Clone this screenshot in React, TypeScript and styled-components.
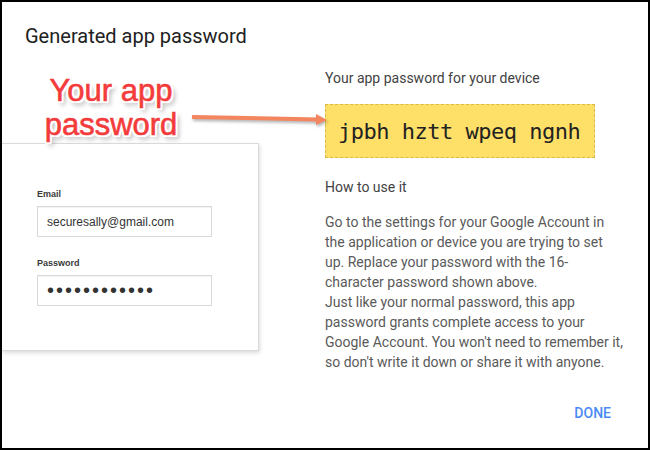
import React from "react";
import styled, { createGlobalStyle } from "styled-components";

const GlobalStyle = createGlobalStyle`
  * { box-sizing: border-box; }
  body {
    margin: 0;
    background: #fff;
    font-family: Roboto, "Liberation Sans", Arial, sans-serif;
  }
`;

const Frame = styled.div`
  position: relative;
  width: 650px;
  height: 450px;
  border: 2px solid #000;
  background: #fff;
  display: flex;
  flex-direction: column;
`;

const Title = styled.h1`
  margin: 22px 0 0 23px;
  font-size: 20px;
  line-height: 24px;
  font-weight: 400;
  color: #212121;
`;

const Body = styled.div`
  display: flex;
  flex: 1;
`;

const LeftColumn = styled.div`
  width: 323px;
  display: flex;
  flex-direction: column;
`;

const Annotation = styled.div`
  position: relative;
  z-index: 2;
  width: 218px;
  margin-top: 26px;
  text-align: center;
  font-family: "Liberation Sans", Arial, sans-serif;
  font-size: 31px;
  line-height: 34px;
  color: #f43b3b;
  -webkit-text-stroke: 0.6px #f43b3b;
  text-shadow: -2px -2px 0 #fff, 2px -2px 0 #fff, -2px 2px 0 #fff,
    2px 2px 0 #fff, 0 -2px 0 #fff, 0 2px 0 #fff, -2px 0 0 #fff, 2px 0 0 #fff,
    3px 4px 5px rgba(0, 0, 0, 0.4);
`;

const Card = styled.div`
  width: 257px;
  margin-top: 1px;
  padding: 44px 0 44px 35px;
  background: #fff;
  border: 1px solid #dadada;
  border-left: none;
  box-shadow: 1px 2px 4px rgba(0, 0, 0, 0.14);
`;

const FieldLabel = styled.div<{ $gap?: number }>`
  margin-top: ${(p) => p.$gap ?? 0}px;
  margin-bottom: 6px;
  font-family: "Liberation Sans", Arial, sans-serif;
  font-size: 9px;
  line-height: 12px;
  font-weight: 700;
  color: #3a3a3a;
`;

const Field = styled.div`
  width: 175px;
  height: 31px;
  padding-left: 9px;
  display: flex;
  align-items: center;
  border: 1px solid #d9d9d9;
  box-shadow: inset 0 1px 1px rgba(0, 0, 0, 0.05);
  font-family: "Liberation Sans", Arial, sans-serif;
  font-size: 12px;
  color: #333;
`;

const Dots = styled.span`
  font-size: 20px;
  letter-spacing: 2px;
  color: #333;
`;

const RightColumn = styled.div`
  width: 300px;
  margin-top: 20px;
  display: flex;
  flex-direction: column;
`;

const Heading = styled.div<{ $gap?: number }>`
  margin-top: ${(p) => p.$gap ?? 0}px;
  font-size: 14px;
  line-height: 20px;
  color: #424242;
`;

const PasswordBox = styled.div`
  width: 270px;
  height: 54px;
  margin-top: 16px;
  padding: 1px 0 0 12px;
  background: #fedf68;
  border: 1px dashed #d8bb45;
  font-family: "DejaVu Sans Mono", "Liberation Mono", monospace;
  font-size: 22px;
  letter-spacing: -0.5px;
  line-height: 52px;
  color: #222;
`;

const Instructions = styled.p`
  width: 310px;
  margin: 15px 0 0;
  font-size: 14px;
  line-height: 20px;
  color: #5a5a5a;
  white-space: nowrap;
`;

const Actions = styled.div`
  display: flex;
  justify-content: flex-end;
  margin-top: 31px;
  padding-right: 14px;
`;

const DoneButton = styled.button`
  padding: 0;
  border: none;
  background: none;
  font-family: Roboto, "Liberation Sans", Arial, sans-serif;
  font-size: 14px;
  line-height: 20px;
  font-weight: 500;
  color: #4a8af4;
  cursor: pointer;
`;

const Arrow = styled.svg`
  position: absolute;
  left: 186px;
  top: 104px;
  overflow: visible;
  filter: drop-shadow(1px 2px 1.5px rgba(0, 0, 0, 0.3));
`;

const instructionLines = [
  "Go to the settings for your Google Account in",
  "the application or device you are trying to set",
  "up. Replace your password with the 16-",
  "character password shown above.",
  "Just like your normal password, this app",
  "password grants complete access to your",
  "Google Account. You won't need to remember it,",
  "so don't write it down or share it with anyone.",
];

export default function App() {
  return (
    <>
      <GlobalStyle />
      <Frame>
        <Title>Generated app password</Title>
        <Body>
          <LeftColumn>
            <Annotation>
              Your app
              <br />
              password
            </Annotation>
            <Card>
              <FieldLabel>Email</FieldLabel>
              <Field>securesally@gmail.com</Field>
              <FieldLabel $gap={20}>Password</FieldLabel>
              <Field>
                <Dots>••••••••••••</Dots>
              </Field>
            </Card>
          </LeftColumn>
          <RightColumn>
            <Heading>Your app password for your device</Heading>
            <PasswordBox>jpbh hztt wpeq ngnh</PasswordBox>
            <Heading $gap={19}>How to use it</Heading>
            <Instructions>
              {instructionLines.map((line, i) => (
                <React.Fragment key={i}>
                  {line}
                  {i < instructionLines.length - 1 && <br />}
                </React.Fragment>
              ))}
            </Instructions>
            <Actions>
              <DoneButton>DONE</DoneButton>
            </Actions>
          </RightColumn>
        </Body>
        <Arrow width="140" height="22" viewBox="0 0 140 22">
          <line x1="4" y1="11" x2="130" y2="13.5" stroke="#f4865f" strokeWidth="4" />
          <polygon points="128,8 139,14 128,19" fill="#f4865f" />
        </Arrow>
      </Frame>
    </>
  );
}
